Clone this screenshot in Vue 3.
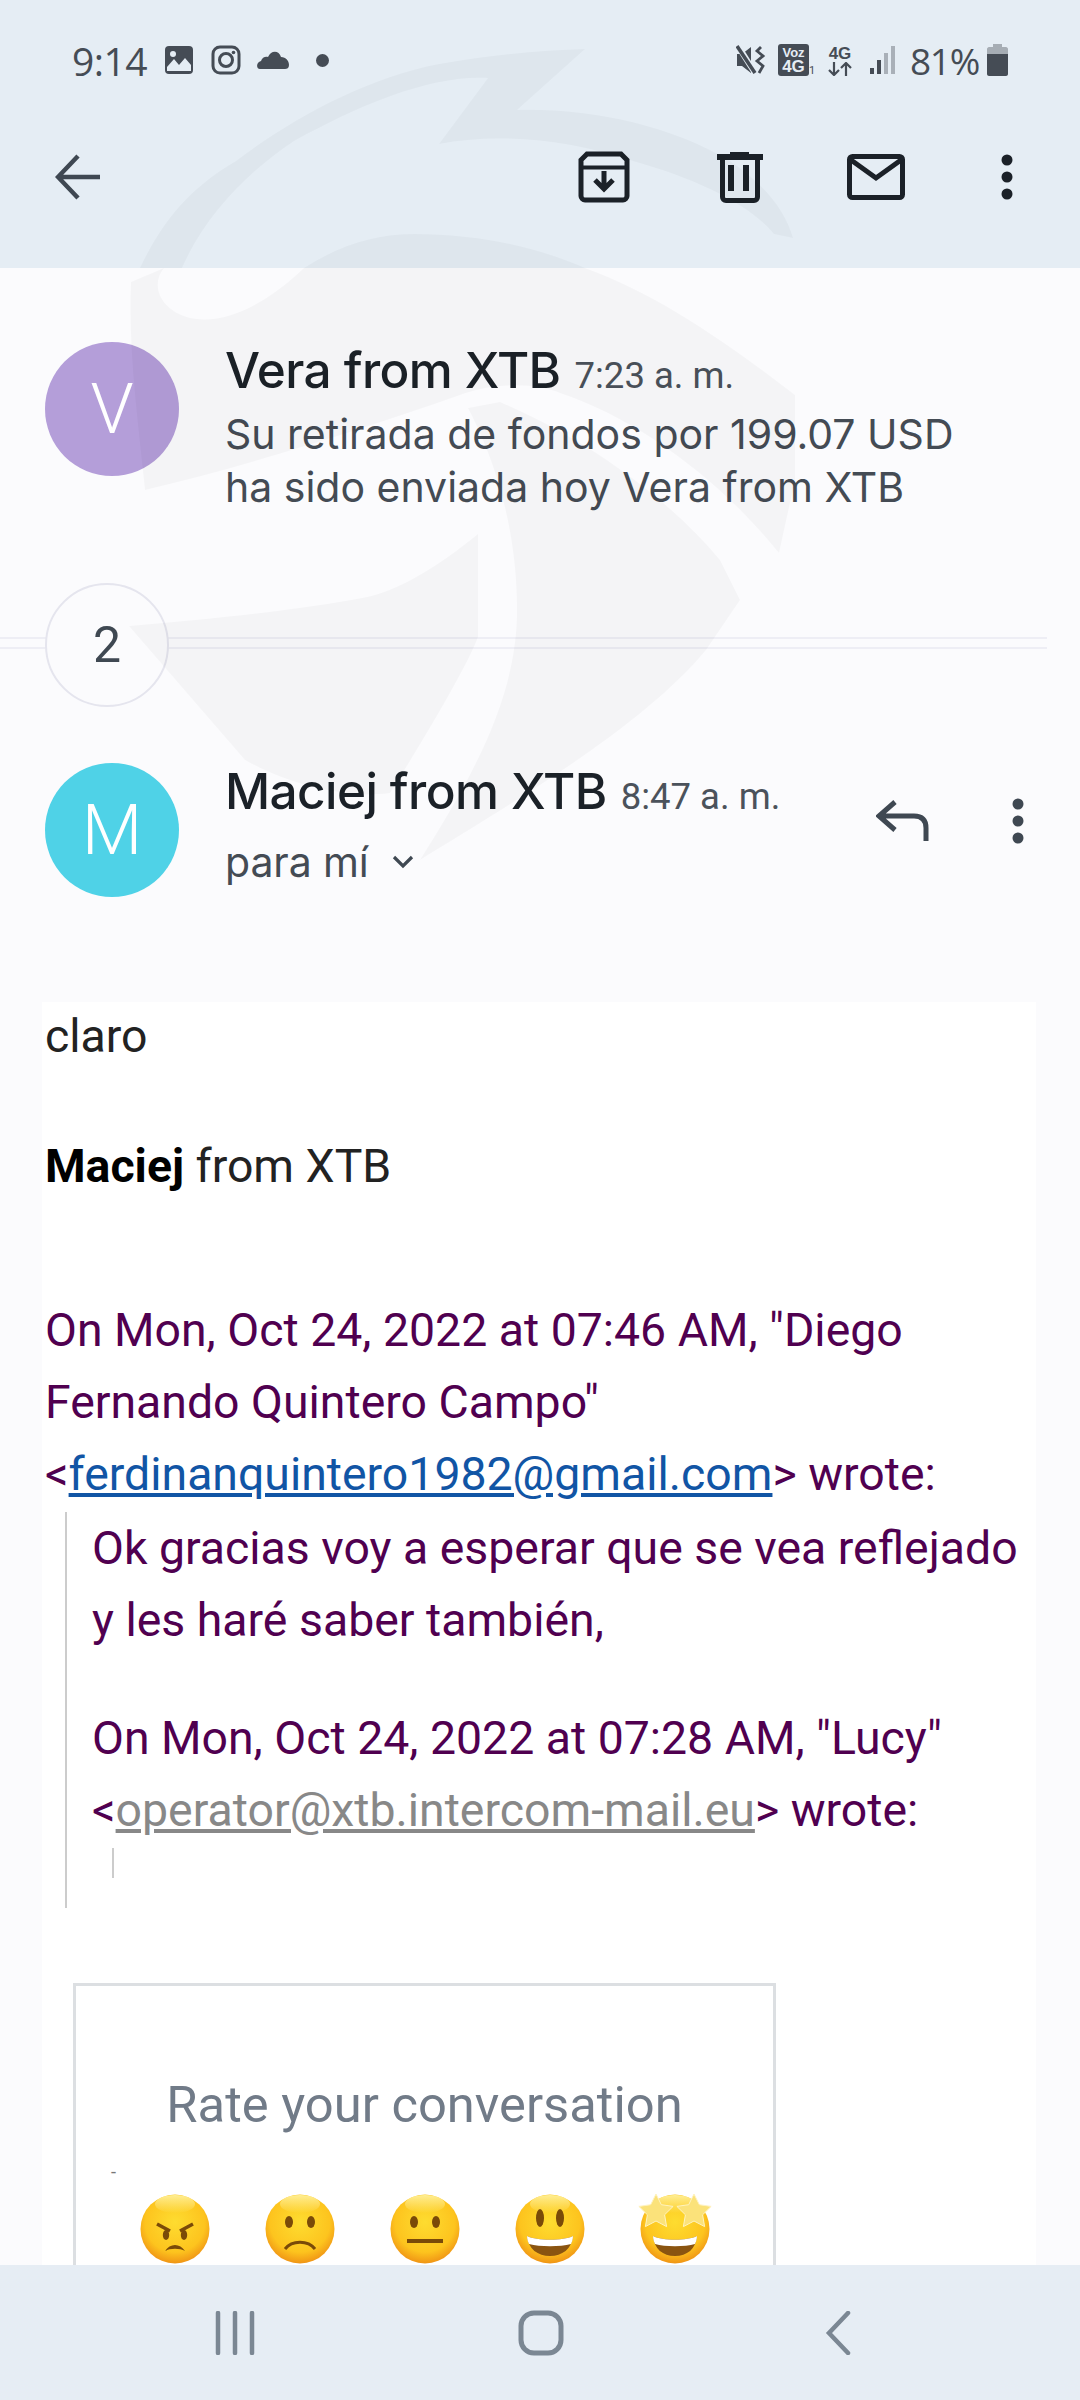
<script setup>
const faces = ['angry', 'sad', 'neutral', 'smile', 'stars']

function star(cx, cy, R) {
  const pts = []
  for (let i = 0; i < 10; i++) {
    const r = i % 2 === 0 ? R : R * 0.5
    const a = -Math.PI / 2 + (i * Math.PI) / 5
    pts.push((cx + r * Math.cos(a)).toFixed(1) + ',' + (cy + r * Math.sin(a)).toFixed(1))
  }
  return pts.join(' ')
}
</script>

<template>
  <div class="screen">
    <svg class="watermark" width="1080" height="1000" viewBox="0 0 1080 1000" aria-hidden="true">
      <path class="wm" d="M585 49 L517 110 C590 108 670 125 730 161 C765 185 785 210 793 238 L774 234 C750 205 700 180 633 161 C570 140 500 132 439 144 L488 78 C430 75 360 105 294 141 C250 170 205 215 182 268 L140 268 C165 215 195 185 236 161 C290 120 365 78 439 64 C490 55 540 50 585 49 Z"/>
      <path class="wm" d="M304 268 C340 245 375 234 415 234 C480 234 540 248 585 268 C660 295 730 345 795 395 L795 480 L779 553 C720 480 640 420 560 393 C540 385 500 380 460 395 C360 430 250 465 145 490 C138 420 128 350 131 282 L164 268 C150 285 160 310 190 318 C225 325 265 305 304 268 Z"/>
      <path class="wm" d="M500 402 C590 440 670 500 720 560 L740 600 L706 650 C640 730 500 810 420 860 C470 780 517 700 517 610 C517 520 490 450 468 408 Z"/>
      <path class="wm" d="M478 534 C440 565 400 590 367 597 C300 610 220 618 129 626 L245 760 C280 780 340 800 390 793 C430 730 470 660 478 637 Z"/>
    </svg>

    <header class="appbar">
      <div class="status">
        <div class="status-left">
          <span class="clock">9:14</span>
          <svg class="st-ic" width="30" height="30" viewBox="0 0 30 30"><rect x="1" y="1" width="28" height="28" rx="4" fill="#454c55"/><circle cx="9" cy="9" r="3" fill="#e5edf4"/><path d="M3 26 L3 22 L10 14 L15 20 L21 13 L27 20 L27 26 Z" fill="#e5edf4"/></svg>
          <svg class="st-ic" width="30" height="30" viewBox="0 0 30 30"><rect x="2" y="2" width="26" height="26" rx="7" fill="none" stroke="#454c55" stroke-width="3"/><circle cx="15" cy="15" r="6.5" fill="none" stroke="#454c55" stroke-width="3"/><circle cx="22.5" cy="7.5" r="1.8" fill="#454c55"/></svg>
          <svg class="cloud" width="34" height="20" viewBox="0 0 34 20"><path d="M4 19 C0 19 0 12 5 11 C6 7 10 6 12 7 C15 0 23 0 25 7 C30 7 33 11 33 15 C33 18 31 19 29 19 Z" fill="#454c55"/></svg>
          <span class="dot"></span>
        </div>
        <div class="status-right">
          <svg width="30" height="30" viewBox="0 0 30 30"><path d="M1 9 H6 L15 2 V28 L6 21 H1 Z" fill="#454c55"/><path d="M2 1 L19 28" stroke="#e5edf4" stroke-width="6"/><path d="M1 1 L19 28" stroke="#454c55" stroke-width="3.500"/><path d="M25 2 L21 6 L27 11 L21 16 L27 21 L23 28" fill="none" stroke="#454c55" stroke-width="2.800"/></svg>
          <span class="voz"><span class="voz-box"><span class="v1">Voz</span><span class="v2">4G</span></span><span class="sim">1</span></span>
          <span class="net"><span>4G</span><svg width="26" height="14" viewBox="0 0 26 14"><path d="M7 0 V13 M2 8 L7 13 L12 8 M19 14 V1 M14 6 L19 1 L24 6" fill="none" stroke="#454c55" stroke-width="2.200"/></svg></span>
          <svg width="27" height="30" viewBox="0 0 27 30"><rect x="1" y="23" width="4" height="6" fill="#454c55"/><rect x="8" y="15" width="4" height="14" fill="#454c55"/><rect x="15" y="8" width="4" height="21" fill="#a9b0b8"/><rect x="22" y="1" width="4" height="28" fill="#a9b0b8"/></svg>
          <span class="pct">81%</span>
          <svg width="21" height="32" viewBox="0 0 21 32"><path d="M6 0 H15 V3 H19 C20 3 21 4 21 5 V13 H0 V5 C0 4 1 3 2 3 H6 Z" fill="#a6adb4"/><path d="M0 10 H21 V30 C21 31 20 32 19 32 H2 C1 32 0 31 0 30 Z" fill="#454c55"/></svg>
        </div>
      </div>
      <div class="toolbar">
        <svg class="back" width="46" height="46" viewBox="0 0 46 46"><path d="M23 2 L3 23 L23 44 M3 23 H45" fill="none" stroke="#3f4852" stroke-width="4.500"/></svg>
        <div class="tools">
          <svg width="52" height="52" viewBox="0 0 52 52"><path d="M9 3 H43 L49 9 V45 C49 47 47 49 45 49 H7 C5 49 3 47 3 45 V9 Z" fill="none" stroke="#1b2128" stroke-width="5"/><path d="M4 16.500 H48" stroke="#1b2128" stroke-width="4"/><path d="M26 20 V38 M17 29 L26 38 L35 29" fill="none" stroke="#1b2128" stroke-width="5"/></svg>
          <svg width="46" height="51" viewBox="0 0 46 51"><path d="M13 0 H32 V2 H46 V8 H0 V2 H13 Z" fill="#1b2128"/><path d="M5.500 8 V45 C5.500 47 7 48.500 9 48.500 H37 C39 48.500 40.500 47 40.500 45 V8" fill="none" stroke="#1b2128" stroke-width="5"/><path d="M14 13 V39 M29 13 V39" stroke="#1b2128" stroke-width="6"/></svg>
          <svg width="58" height="46" viewBox="0 0 58 46"><rect x="2.500" y="2.500" width="53" height="41" rx="3" fill="none" stroke="#1b2128" stroke-width="5"/><path d="M4 6 L29 24 L54 6" fill="none" stroke="#1b2128" stroke-width="5"/></svg>
          <svg width="14" height="46" viewBox="0 0 14 46"><circle cx="7" cy="6" r="5.500" fill="#1b2128"/><circle cx="7" cy="23" r="5.500" fill="#1b2128"/><circle cx="7" cy="40" r="5.500" fill="#1b2128"/></svg>
        </div>
      </div>
    </header>

    <main class="content">
      <section class="msg-row collapsed">
        <div class="avatar violet">V</div>
        <div class="msg-text">
          <div class="title-line"><span class="name">Vera from XTB</span><span class="time">7:23 a. m.</span></div>
          <div class="snippet">Su retirada de fondos por 199.07 USD<br>ha sido enviada hoy Vera from XTB</div>
        </div>
      </section>

      <section class="divider">
        <div class="lines"></div>
        <div class="count">2</div>
      </section>

      <section class="msg-row open">
        <div class="avatar cyan">M</div>
        <div class="msg-text">
          <div class="title-line"><span class="name">Maciej from XTB</span><span class="time">8:47 a. m.</span></div>
          <div class="para">para mí
            <svg width="24" height="16" viewBox="0 0 24 16"><path d="M3 3 L12 12 L21 3" fill="none" stroke="#3f4852" stroke-width="3.200"/></svg>
          </div>
        </div>
        <div class="msg-actions">
          <svg width="54" height="42" viewBox="0 0 54 42"><path d="M19 2 L3 16 L19 30 M3 16 H38 C46 16 50 20 50 28 V41" fill="none" stroke="#3f4852" stroke-width="5"/></svg>
          <svg width="14" height="46" viewBox="0 0 14 46"><circle cx="7" cy="6" r="5.500" fill="#3f4852"/><circle cx="7" cy="23" r="5.500" fill="#3f4852"/><circle cx="7" cy="40" r="5.500" fill="#3f4852"/></svg>
        </div>
      </section>

      <article class="mail">
        <p class="claro">claro</p>
        <p class="sign"><b>Maciej</b> from XTB</p>
        <div class="quote">
          <p>On Mon, Oct 24, 2022 at 07:46 AM, "Diego<br>Fernando Quintero Campo"<br>&lt;<a class="blue">ferdinanquintero1982@gmail.com</a>&gt; wrote:</p>
          <blockquote>
            <p>Ok gracias voy a esperar que se vea reflejado<br>y les haré saber también,</p>
            <p class="second">On Mon, Oct 24, 2022 at 07:28 AM, "Lucy"<br>&lt;<a class="grey">operator@xtb.intercom-mail.eu</a>&gt; wrote:</p>
            <div class="inner"></div>
          </blockquote>
        </div>
        <div class="rate">
          <div class="rate-title">Rate your conversation</div>
          <div class="dash">-</div>
          <div class="faces">
            <svg v-for="f in faces" :key="f" class="face" width="76" height="76" viewBox="0 0 76 76">
              <defs>
                <radialGradient :id="'g-' + f" cx="50%" cy="40%" r="62%">
                  <stop offset="0" stop-color="#fedc30"/>
                  <stop offset=".7" stop-color="#fdc41e"/>
                  <stop offset="1" stop-color="#ee8f14"/>
                </radialGradient>
                <linearGradient :id="'h-' + f" x1="0" y1="0" x2="0" y2="1">
                  <stop offset="0" stop-color="#fff3a0" stop-opacity=".9"/>
                  <stop offset="1" stop-color="#fff3a0" stop-opacity="0"/>
                </linearGradient>
              </defs>
              <circle cx="38" cy="40" r="34.500" :fill="'url(#g-' + f + ')'"/>
              <ellipse cx="38" cy="15" rx="20" ry="9" :fill="'url(#h-' + f + ')'"/>
              <template v-if="f === 'angry'">
                <path d="M20 35 L33 42 M56 35 L43 42" stroke="#7a4a08" stroke-width="3.500" fill="none"/>
                <ellipse cx="29" cy="46" rx="3.200" ry="5" fill="#7a4a08"/>
                <ellipse cx="47" cy="46" rx="3.200" ry="5" fill="#7a4a08"/>
                <path d="M28 62 C33 54 43 54 48 62 C43 59 33 59 28 62 Z" fill="#7a4a08"/>
              </template>
              <template v-else-if="f === 'sad'">
                <ellipse cx="27" cy="33" rx="4" ry="6" fill="#7a4a08"/>
                <ellipse cx="49" cy="33" rx="4" ry="6" fill="#7a4a08"/>
                <path d="M23 60 C30 51 46 51 53 60" stroke="#7a4a08" stroke-width="3" fill="none"/>
              </template>
              <template v-else-if="f === 'neutral'">
                <ellipse cx="27" cy="33" rx="4" ry="6" fill="#7a4a08"/>
                <ellipse cx="49" cy="33" rx="4" ry="6" fill="#7a4a08"/>
                <rect x="20" y="50" width="36" height="4" fill="#7a4a08"/>
              </template>
              <template v-else-if="f === 'smile'">
                <ellipse cx="28" cy="29" rx="4" ry="9" fill="#7a4a08"/>
                <ellipse cx="48" cy="29" rx="4" ry="9" fill="#7a4a08"/>
                <path d="M15 47 C25 52 51 52 61 47 C60 60 50 67 38 67 C26 67 16 60 15 47 Z" fill="#8a5410"/>
                <path d="M15 47 C25 52 51 52 61 47 C61 50 60 53 59 55 C48 58 28 58 17 55 C16 53 15 50 15 47 Z" fill="#fff"/>
              </template>
              <template v-else>
                <path d="M16 47 C26 52 50 52 60 47 C59 60 50 67 38 67 C26 67 17 60 16 47 Z" fill="#8a5410"/>
                <path d="M16 47 C26 52 50 52 60 47 C60 50 59 53 58 55 C48 58 28 58 18 55 C17 53 16 50 16 47 Z" fill="#fff"/>
                <polygon :points="star(19, 23, 18)" fill="#fbe27a" stroke="#fff3c0" stroke-width="1"/>
                <polygon :points="star(57, 23, 18)" fill="#fbe27a" stroke="#fff3c0" stroke-width="1"/>
              </template>
            </svg>
          </div>
        </div>
      </article>
    </main>

    <nav class="navbar">
      <svg width="42" height="44" viewBox="0 0 42 44"><path d="M4 2 V42 M21 2 V42 M38 2 V42" stroke="#7b8793" stroke-width="4.500" stroke-linecap="round"/></svg>
      <svg width="46" height="46" viewBox="0 0 46 46"><rect x="3" y="3" width="40" height="40" rx="13" fill="none" stroke="#7b8793" stroke-width="5"/></svg>
      <svg width="26" height="44" viewBox="0 0 26 44"><path d="M23 2 L4 22 L23 42" fill="none" stroke="#7b8793" stroke-width="4.500" stroke-linecap="round"/></svg>
    </nav>
  </div>
</template>

<style>
html, body { margin: 0; padding: 0; }
</style>

<style scoped>
.screen {
  position: relative;
  width: 1080px;
  height: 2400px;
  overflow: hidden;
  display: flex;
  flex-direction: column;
  background: #fbfbfd;
  font-family: Roboto, "Liberation Sans", sans-serif;
}
.watermark {
  position: absolute;
  left: 0;
  top: 0;
  z-index: 5;
  pointer-events: none;
}
.wm { fill: #000; fill-opacity: .028; }

.appbar {
  height: 268px;
  flex: none;
  background: #e5edf4;
  display: flex;
  flex-direction: column;
  box-sizing: border-box;
  padding: 38px 0 0;
}
.status {
  height: 44px;
  display: flex;
  justify-content: space-between;
  align-items: center;
  padding: 0 72px 0 72px;
  color: #454c55;
}
.status-left, .status-right { display: flex; align-items: center; }
.clock { font-family: "Open Sans", sans-serif; font-size: 39px; letter-spacing: -.5px; margin-right: 17px; }
.st-ic { margin-right: 17px; }
.cloud { margin-left: -2px; }
.dot { width: 13px; height: 13px; border-radius: 50%; background: #454c55; margin-left: 26px; }
.voz { display: flex; align-items: flex-end; margin-left: 12px; }
.voz-box {
  width: 31px; height: 32px; border-radius: 3px; background: #454c55; color: #e5edf4;
  display: flex; flex-direction: column; align-items: center; justify-content: center;
  font-weight: 700; font-family: "Liberation Sans", sans-serif;
}
.v1 { font-size: 13px; line-height: 13px; }
.v2 { font-size: 17px; line-height: 16px; }
.sim { font-size: 11px; line-height: 11px; width: 7px; }
.net {
  display: flex; flex-direction: column; align-items: center; margin: 0 16px 0 11px;
  font-size: 17px; line-height: 17px; font-weight: 700; font-family: "Liberation Sans", sans-serif;
}
.pct { font-family: "Open Sans", sans-serif; font-size: 37px; margin: 0 8px 0 14px; letter-spacing: -1.300px; }

.toolbar {
  display: flex;
  justify-content: space-between;
  align-items: center;
  margin-top: 65px;
  padding: 0 66px 0 55px;
  height: 60px;
}
.tools { display: flex; align-items: center; }
.tools svg:nth-child(1) { margin-right: 87px; }
.tools svg:nth-child(2) { margin-right: 84px; }
.tools svg:nth-child(3) { margin-right: 95px; }

.content { flex: 1; min-height: 0; display: flex; flex-direction: column; overflow: hidden; }
.msg-row { display: flex; padding-left: 45px; }
.collapsed { margin-top: 74px; height: 134px; flex: none; }
.avatar {
  width: 134px; height: 134px; border-radius: 50%; flex: none; color: #fff;
  display: flex; align-items: center; justify-content: center; font-size: 70px; font-weight: 300;
  margin-right: 46px;
}
.violet { background: #b49ed9; }
.cyan { background: #4fd2e7; }
.msg-text { flex: 1; min-width: 0; }
.title-line { display: flex; align-items: baseline; color: #1b2128; white-space: nowrap; }
.name { font-family: Inter, Roboto, sans-serif; font-size: 49.500px; font-weight: 500; line-height: 56px; margin-right: 14px; letter-spacing: -.6px; }
.time { font-size: 36.500px; color: #4b525b; }
.snippet { font-family: Inter, Roboto, sans-serif; font-size: 41px; line-height: 53px; color: #444b54; margin-top: 10px; white-space: nowrap; letter-spacing: 0; }

.divider { position: relative; height: 124px; margin-top: 107px; flex: none; }
.lines {
  position: absolute; left: 0; width: 1047px; top: 54px; height: 12px;
  border-top: 2px solid #eeeef5; border-bottom: 2px solid #eeeef5; box-sizing: border-box;
}
.count {
  position: absolute; left: 45px; top: 0; width: 124px; height: 124px; box-sizing: border-box;
  border: 2px solid #e5e5ee; border-radius: 50%; background: #fbfbfd; color: #3f4852;
  display: flex; align-items: center; justify-content: center; font-size: 50px;
}
.open { margin-top: 56px; height: 134px; flex: none; }
.para { font-family: Inter, Roboto, sans-serif; font-size: 41px; line-height: 50px; color: #444b54; margin-top: 18px; display: flex; align-items: center; gap: 22px; letter-spacing: -.1px; }
.msg-actions { display: flex; align-items: center; gap: 81px; padding: 0 55px 0 0; height: 116px; }

.mail {
  margin: 105px 44px 0 42px;
  background: #fff;
  flex: 1;
  padding-left: 3px;
  color: #222;
  font-size: 46.400px;
}
.mail p { margin: 0; }
.claro { padding-top: 8px; line-height: 52px; }
.sign { margin-top: 78px !important; line-height: 52px; }
.sign b { color: #000; font-weight: 700; }
.quote { margin-top: 102px; color: #500050; line-height: 72px; }
.blue { color: #1155a5; text-decoration: underline; }
.grey { color: #888; text-decoration: underline; }
blockquote {
  margin: 2px 0 0 20px;
  padding: 0 0 0 25px;
  border-left: 2px solid #ccc;
  height: 396px;
  box-sizing: border-box;
}
.second { margin-top: 46px !important; }
.inner { margin: 2px 0 0 20px; width: 2px; height: 30px; background: #ccc; }
.rate {
  margin: 75px 0 0 28px;
  width: 703px;
  height: 400px;
  box-sizing: border-box;
  border: 3px solid #dcdfe2;
  border-bottom: 0;
  padding-top: 84px;
}
.rate-title { text-align: center; color: #717b88; font-size: 50.700px; line-height: 70px; }
.dash { font-size: 18px; color: #777; line-height: 20px; margin: 22px 0 0 35px; }
.faces { display: flex; gap: 49px; padding-left: 61px; margin-top: 7px; }
.face { overflow: visible; flex: none; }

.navbar {
  height: 135px;
  flex: none;
  background: #e6edf4;
  display: flex;
  align-items: center;
  justify-content: space-between;
  box-sizing: border-box;
  padding: 0 229px 0 214px;
  position: relative;
  z-index: 6;
}
</style>
